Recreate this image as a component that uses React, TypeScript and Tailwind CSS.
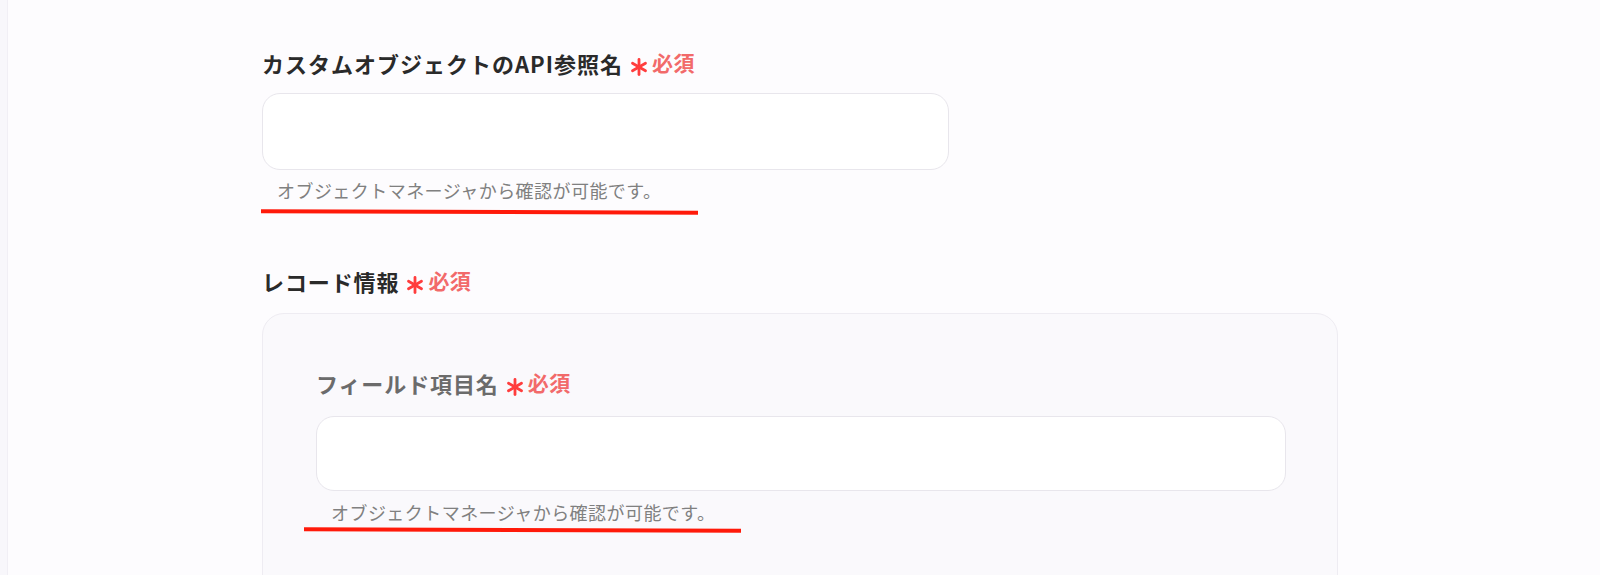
import React from "react";

const font = { fontFamily: '"Noto Sans CJK JP", "Noto Sans", sans-serif' };

function Star() {
  return (
    <svg width="18" height="18" viewBox="0 0 18 18" className="mt-[8px]">
      <g stroke="#ff3d3d" strokeWidth="2.8" strokeLinecap="round">
        <line x1="9" y1="1.5" x2="9" y2="16.5" />
        <line x1="2.5" y1="5.2" x2="15.5" y2="12.8" />
        <line x1="2.5" y1="12.8" x2="15.5" y2="5.2" />
      </g>
    </svg>
  );
}

function Required() {
  return (
    <span className="flex items-center ml-[7px] gap-[4px]">
      <Star />
      <span className="text-[21px] font-bold text-[#f26a6a] tracking-[0.4px]">必須</span>
    </span>
  );
}

export default function App() {
  return (
    <div style={font} className="flex w-[1600px] h-[575px] overflow-hidden bg-[#fdfcfe]">
      <div className="w-[8px] shrink-0 bg-[#f8f7fb] border-r border-[#f1eff5]" />
      <div className="flex-1 pl-[254px] pt-[48px]">
        {/* Field 1 */}
        <div className="flex items-center h-[30px]">
          <span className="text-[22px] leading-[30px] font-bold text-[#2a2a2a] tracking-[1px]">
            カスタムオブジェクトのAPI参照名
          </span>
          <Required />
        </div>
        <div className="mt-[15px] w-[687px] h-[77px] rounded-[18px] bg-white border-[1.5px] border-[#e8e6ec]" />
        <div className="mt-[8px] ml-[15px] text-[18px] leading-[24px] text-[#808080] tracking-[0.45px]">
          オブジェクトマネージャから確認が可能です。
        </div>
        <div className="mt-[8px] -ml-[1px] w-[437px] h-[4px] bg-[#ff1a0a] rotate-[0.2deg]" />

        {/* Field 2 */}
        <div className="mt-[52px] flex items-center h-[30px]">
          <span className="text-[22px] leading-[30px] font-bold text-[#2a2a2a] tracking-[0.9px]">レコード情報</span>
          <Required />
        </div>
        <div className="mt-[17px] w-[1076px] h-[300px] rounded-[22px] bg-[#faf9fc] border-[1.5px] border-[#eeecf2] pl-[53px] pr-[51px] pt-[54px]">
          <div className="flex items-center h-[30px]">
            <span className="text-[22px] leading-[30px] font-bold text-[#6b6b6b] tracking-[0.9px]">フィールド項目名</span>
            <Required />
          </div>
          <div className="mt-[18px] h-[75px] rounded-[18px] bg-white border-[1.5px] border-[#e8e6ec]" />
          <div className="mt-[9px] ml-[15px] text-[18px] leading-[24px] text-[#808080] tracking-[0.45px]">
            オブジェクトマネージャから確認が可能です。
          </div>
          <div className="mt-[4px] -ml-[12px] w-[437px] h-[4px] bg-[#ff1a0a] rotate-[0.2deg]" />
        </div>
      </div>
    </div>
  );
}
